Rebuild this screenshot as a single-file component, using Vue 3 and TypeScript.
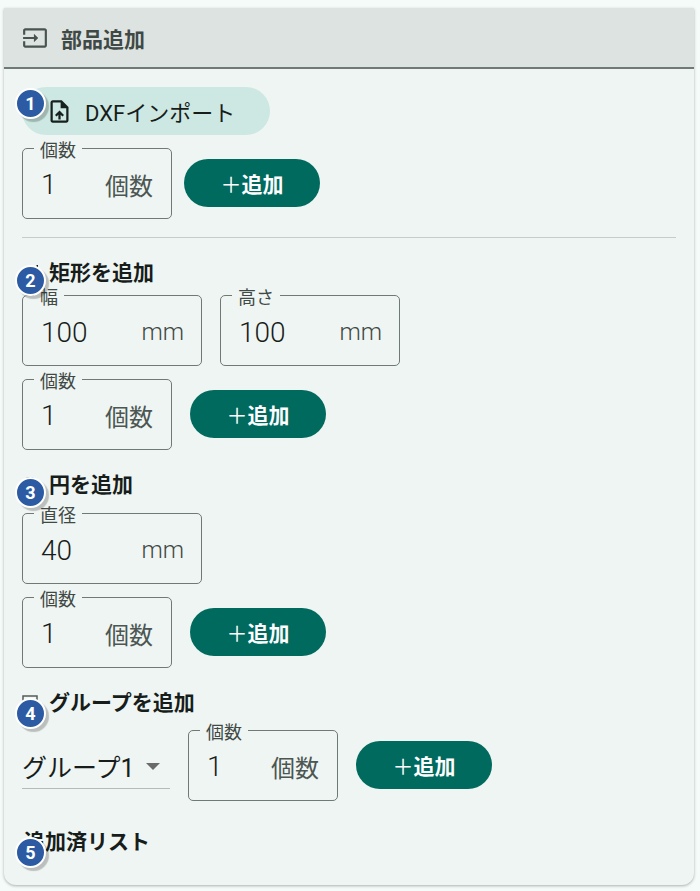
<script setup lang="ts">
interface Field { label: string; value: string; unit: string }
const count: Field = { label: '個数', value: '1', unit: '個数' }
const rect: Field[] = [
  { label: '幅', value: '100', unit: 'mm' },
  { label: '高さ', value: '100', unit: 'mm' },
]
const circle: Field = { label: '直径', value: '40', unit: 'mm' }
</script>

<template>
  <div class="page">
    <section class="card">
      <header class="card-head">
        <svg viewBox="0 0 24 24" width="26" height="26" fill="#49534f">
          <path d="M21 3.010H3c-1.100 0-2 .9-2 2V9h2V4.990h18v14.030H3V15H1v4.010c0 1.100.9 1.980 2 1.980h18c1.100 0 2-.88 2-1.980v-14c0-1.110-.9-2-2-2zM11 16l4-4-4-4v3H1v2h10v3z" />
        </svg>
        <h2 class="head-title">部品追加</h2>
      </header>

      <div class="body">
        <div class="block block-import">
          <span class="badge">1</span>
          <button class="import-btn" type="button">
            <svg viewBox="0 0 24 24" width="27" height="27" fill="#16211e">
              <path d="M14 2H6c-1.100 0-2 .9-2 2v16c0 1.100.89 2 1.990 2H18c1.100 0 2-.9 2-2V8l-6-6zm4 18H6V4h7v5h5v11zM8 15.010l1.410 1.410L11 14.840V19h2v-4.160l1.590 1.590L16 15.010 12.010 11z" />
            </svg>
            <span>DXFインポート</span>
          </button>
          <div class="row row-first">
            <div class="field small">
              <span class="legend">{{ count.label }}</span>
              <span class="value">{{ count.value }}</span>
              <span class="unit jp">{{ count.unit }}</span>
            </div>
            <button class="add" type="button"><span class="plus">＋</span>追加</button>
          </div>
        </div>

        <hr class="divider" />

        <div class="block block-rect">
          <span class="badge">2</span>
          <h3 class="sub">
            <svg class="sub-icon" viewBox="0 0 16 16" fill="none" stroke="#171d1b" stroke-width="2"><path d="M15.500 0v5" /></svg>
            矩形を追加
          </h3>
          <div class="row rect-row">
            <div v-for="f in rect" :key="f.label" class="field">
              <span class="legend">{{ f.label }}</span>
              <span class="value">{{ f.value }}</span>
              <span class="unit">{{ f.unit }}</span>
            </div>
          </div>
          <div class="row row-next">
            <div class="field small">
              <span class="legend">{{ count.label }}</span>
              <span class="value">{{ count.value }}</span>
              <span class="unit jp">{{ count.unit }}</span>
            </div>
            <button class="add" type="button"><span class="plus">＋</span>追加</button>
          </div>
        </div>

        <div class="block block-circle">
          <span class="badge">3</span>
          <h3 class="sub">
            <svg class="sub-icon" viewBox="0 0 16 16" fill="none" stroke="#171d1b" stroke-width="2"><circle cx="8" cy="8" r="7" /></svg>
            円を追加
          </h3>
          <div class="row rect-row circle-row">
            <div class="field">
              <span class="legend">{{ circle.label }}</span>
              <span class="value">{{ circle.value }}</span>
              <span class="unit">{{ circle.unit }}</span>
            </div>
          </div>
          <div class="row row-next">
            <div class="field small">
              <span class="legend">{{ count.label }}</span>
              <span class="value">{{ count.value }}</span>
              <span class="unit jp">{{ count.unit }}</span>
            </div>
            <button class="add" type="button"><span class="plus">＋</span>追加</button>
          </div>
        </div>

        <div class="block block-group">
          <span class="badge">4</span>
          <h3 class="sub">
            <svg class="sub-icon" viewBox="0 0 16 16" fill="none" stroke="#555b58" stroke-width="1.500"><rect x="1" y="1" width="14" height="14" /></svg>
            グループを追加
          </h3>
          <div class="row group-row">
            <div class="select">
              <span>グループ1</span>
              <span class="caret"></span>
            </div>
            <div class="field small">
              <span class="legend">{{ count.label }}</span>
              <span class="value">{{ count.value }}</span>
              <span class="unit jp">{{ count.unit }}</span>
            </div>
            <button class="add" type="button"><span class="plus">＋</span>追加</button>
          </div>
        </div>

        <div class="block block-list">
          <span class="badge">5</span>
          <h3 class="sub list-title">追加済リスト</h3>
        </div>
      </div>
    </section>
  </div>
</template>

<style>
html, body { margin: 0; background: #f5fbf8; }
</style>

<style scoped>
.page {
  box-sizing: border-box;
  width: 700px;
  height: 891px;
  padding: 8px 6px 6px 4px;
  font-family: Roboto, "Noto Sans CJK JP", sans-serif;
  color: #171d1b;
}
.card {
  height: 877px;
  box-sizing: border-box;
  background: #eff5f2;
  border-radius: 0 0 12px 12px;
  box-shadow: 0 1px 3px rgba(0, 0, 0, .3);
  overflow: hidden;
}
.card-head {
  height: 61px;
  box-sizing: border-box;
  display: flex;
  align-items: center;
  gap: 13px;
  padding: 1px 18px 0;
  background: #dde3e0;
  border-bottom: 2px solid #6f7975;
}
.head-title {
  margin: 0;
  font-size: 21px;
  font-weight: 700;
  color: #3f4946;
}
.body { padding: 18px; }
.block { position: relative; }
.badge {
  position: absolute;
  left: -7px;
  width: 27px;
  height: 27px;
  border: 2px solid #fff;
  border-radius: 50%;
  background: #2c5ba3;
  color: #fff;
  font-size: 18px;
  font-weight: 700;
  line-height: 27px;
  text-align: center;
  box-shadow: 3px 3px 1px rgba(0, 0, 0, .22);
  z-index: 2;
}
.block-import .badge { top: 1px; }
.block-rect .badge { top: 4px; }
.block-circle .badge { top: 4px; }
.block-group .badge { top: 7px; }
.block-list .badge { top: 7px; }

.import-btn {
  display: flex;
  align-items: center;
  gap: 12px;
  box-sizing: border-box;
  width: 248px;
  height: 48px;
  padding: 0 24px;
  border: 0;
  border-radius: 24px;
  background: #cde8e2;
  color: #171d1b;
  font: 400 22px Roboto, "Noto Sans CJK JP", sans-serif;
}
.row { display: flex; align-items: center; }
.row-first { gap: 12px; margin-top: 13px; }
.divider {
  margin: 18px 0 0;
  border: 0;
  border-top: 1px solid #c6ccc9;
}
.sub {
  display: flex;
  align-items: center;
  margin: 0;
  height: 24px;
  font-size: 21px;
  font-weight: 700;
  line-height: 24px;
  color: #171d1b;
}
.list-title { padding-left: 2px; }
.sub-icon {
  width: 16px;
  height: 16px;
  flex: none;
  margin-right: 11px;
}
.block-rect { margin-top: 23px; }
.rect-row { gap: 18px; margin-top: 10px; }
.circle-row { margin-top: 16px; }
.row-next { gap: 18px; margin-top: 13px; }
.block-circle { margin-top: 23px; }
.block-group { margin-top: 23px; }
.block-list { margin-top: 29px; }

.field {
  position: relative;
  box-sizing: border-box;
  width: 180px;
  height: 71px;
  padding: 3px 17px 0 18px;
  display: flex;
  align-items: center;
  justify-content: space-between;
  border: 1px solid #6f7975;
  border-radius: 5px;
}
.field.small { width: 150px; padding-right: 18px; padding-top: 1px; }
.legend {
  position: absolute;
  top: -7px;
  left: 11px;
  padding: 0 6px;
  background: #eff5f2;
  font-size: 18px;
  line-height: 18px;
  color: #3f4946;
}
.value {
  font-size: 28px;
  font-weight: 300;
  color: #171d1b;
}
.unit {
  font-size: 24px;
  font-weight: 300;
  color: #3f4946;
}
.unit.jp { font-weight: 400; color: #4c5653; }
.add {
  box-sizing: border-box;
  width: 136px;
  height: 48px;
  margin-bottom: 1px;
  border: 0;
  border-radius: 24px;
  background: #006a5e;
  color: #fff;
  font: 700 21px Roboto, "Noto Sans CJK JP", sans-serif;
}
.plus { font-weight: 400; }
.group-row { gap: 18px; margin-top: 15px; }
.select {
  box-sizing: border-box;
  width: 148px;
  height: 48px;
  margin-bottom: 1px;
  display: flex;
  align-items: center;
  justify-content: space-between;
  padding: 3px 10px 0 0;
  border-bottom: 1px solid #b5bbb8;
  font-size: 25px;
  color: #171d1b;
}
.caret {
  width: 0;
  height: 0;
  border-left: 7px solid transparent;
  border-right: 7px solid transparent;
  border-top: 7px solid #6a6a6a;
}
</style>
